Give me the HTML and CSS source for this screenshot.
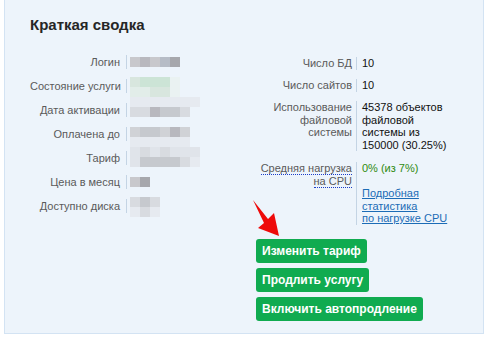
FILE: index.html
```html
<!DOCTYPE html>
<html lang="ru">
<head>
    <meta charset="UTF-8">
    <meta name="viewport" content="width=device-width, initial-scale=1.0">
    <title>Краткая сводка</title>
    <link rel="stylesheet" href="styles.css">
</head>
<body>

    <!-- Панель сводки -->
    <div class="panel">
        <h2 class="panel-title">Краткая сводка</h2>

        <div class="columns">
            <!-- Левая колонка -->
            <div class="info-grid left">
                <div class="lbl">Логин</div><div class="val">&nbsp;</div>
                <div class="lbl">Состояние услуги</div><div class="val">&nbsp;</div>
                <div class="lbl">Дата активации</div><div class="val">&nbsp;</div>
                <div class="lbl">Оплачена до</div><div class="val">&nbsp;</div>
                <div class="lbl">Тариф</div><div class="val">&nbsp;</div>
                <div class="lbl">Цена в месяц</div><div class="val">&nbsp;</div>
                <div class="lbl">Доступно диска</div><div class="val">&nbsp;</div>
            </div>

            <!-- Правая колонка -->
            <div class="right-side">
                <div class="info-grid right">
                    <div class="lbl">Число БД</div><div class="val">10</div>
                    <div class="lbl">Число сайтов</div><div class="val">10</div>
                    <div class="lbl">Использование<br>файловой<br>системы</div>
                    <div class="val">45378 объектов<br>файловой<br>системы из<br>150000 (30.25%)</div>
                    <div class="lbl cpu-row"><span class="hint">Средняя нагрузка</span><br><span class="hint">на CPU</span></div>
                    <div class="val cpu-row"><span class="ok">0% (из 7%)</span><br><br><a href="#">Подробная<br>статистика<br>по нагрузке CPU</a></div>
                </div>

                <div class="actions">
                    <button class="btn">Изменить тариф</button>
                    <button class="btn">Продлить услугу</button>
                    <button class="btn">Включить автопродление</button>
                </div>
            </div>
        </div>

        <!-- Замазанные значения -->
        <div class="mosaic">
            <div class="mrow"><span class="p1"></span><span class="p2"></span><span class="p1"></span><span class="p4"></span><span class="p3"></span></div>
            <div class="mrow"></div>
            <div class="mrow"><span class="q1"></span><span class="q2"></span><span class="q2"></span><span class="q2"></span><span class="q4"></span></div>
            <div class="mrow"><span class="q3"></span><span class="q3"></span><span class="q1"></span><span class="q1"></span><span class="q4"></span></div>
            <div class="mrow"><span class="p9"></span><span class="p9"></span><span class="p9"></span><span class="p9"></span><span class="p9"></span><span class="p9"></span><span class="p9"></span></div>
            <div class="mrow"><span class="p7"></span><span class="p7"></span><span class="p2"></span><span class="p6"></span><span class="p6"></span><span class="p7"></span></div>
            <div class="mrow"></div>
            <div class="mrow"><span class="p5"></span><span class="p6"></span><span class="p6"></span><span class="p5"></span><span class="p2"></span><span class="p5"></span></div>
            <div class="mrow"><span class="p9"></span><span class="p9"></span><span class="p9"></span><span class="p9"></span><span class="p9"></span><span class="p9"></span></div>
            <div class="mrow"><span class="p8"></span><span class="p7"></span><span class="p8"></span><span class="p7"></span><span class="p8"></span><span class="p8"></span><span class="p8"></span></div>
            <div class="mrow"><span class="p8"></span><span class="p6"></span><span class="p6"></span><span class="p6"></span><span class="p6"></span><span class="p7"></span><span class="p9"></span></div>
            <div class="mrow"></div>
            <div class="mrow"><span class="p1"></span><span class="p3"></span></div>
            <div class="mrow"></div>
            <div class="mrow"><span class="p7"></span><span class="p6"></span><span class="p7"></span></div>
            <div class="mrow"><span class="p9"></span><span class="p7"></span><span class="p9"></span></div>
        </div>

        <!-- Стрелка-указатель -->
        <svg class="pointer" width="36" height="44" viewBox="248 196 36 44">
            <polygon points="253,200 268,219 274,213 279,236 258,228 264,223" fill="#ee0a0a"/>
        </svg>
    </div>

</body>
</html>
```

FILE: styles.css
```css
* {
    margin: 0;
    padding: 0;
    box-sizing: border-box;
    font-family: "Liberation Sans", Arial, sans-serif;
}
body {
    background: #fff;
    width: 486px;
    height: 337px;
    overflow: hidden;
}
.panel {
    position: relative;
    margin: -1px 0 0 4px;
    width: 480px;
    height: 335px;
    background: #edf4fb;
    border: 1px solid #d3e3f3;
    padding: 16px 0 0 25px;
}
.panel-title {
    font-size: 15px;
    line-height: 18px;
    font-weight: bold;
    color: #262626;
}
.columns {
    display: flex;
    margin-top: 21px;
}
.info-grid {
    display: grid;
    font-size: 11px;
}
.info-grid .lbl {
    color: #5a5a5a;
    text-align: right;
    white-space: nowrap;
}
.info-grid .val {
    color: #111;
    white-space: nowrap;
    border-left: 1px solid #c4d4e4;
}
.left {
    width: 226px;
    grid-template-columns: 96px 100px;
    row-gap: 10px;
    line-height: 14px;
    align-content: start;
}
.left .lbl {
    padding-right: 6px;
}
.left .val {
    padding-left: 3px;
}
.right {
    padding-top: 2px;
    grid-template-columns: 100px 93px;
    row-gap: 9.5px;
    line-height: 12.5px;
    align-items: start;
}
.right .lbl {
    padding-right: 4px;
}
.right .val {
    padding-left: 5px;
}
.right .cpu-row {
    margin-top: 1.5px;
}
.hint {
    border-bottom: 1px dotted #1a3cc8;
}
.ok {
    color: #2f8a10;
}
.right a {
    color: #1c6cb6;
    text-decoration: underline;
}
.actions {
    display: flex;
    flex-direction: column;
    align-items: flex-start;
    gap: 5px;
    margin-top: 14px;
}
.btn {
    height: 24px;
    padding: 0 6px;
    border: none;
    border-radius: 3px;
    background: #10ab50;
    color: #fff;
    font-size: 12px;
    font-weight: bold;
    line-height: 24px;
    cursor: pointer;
}
.mosaic {
    position: absolute;
    left: 125px;
    top: 57px;
}
.mrow {
    display: flex;
    height: 10px;
}
.mrow span {
    width: 10px;
    height: 10px;
}
.p1 { background: #c8c8cc; }
.p2 { background: #b8b8be; }
.p3 { background: #a6a7ac; }
.p4 { background: #b6bcc6; }
.p5 { background: #d0d2d6; }
.p6 { background: #c6c9ce; }
.p7 { background: #d8dbe0; }
.p8 { background: #e0e4ea; }
.p9 { background: #e6eaf0; }
.q1 { background: #d8e6de; }
.q2 { background: #cce4d6; }
.q3 { background: #e2ede9; }
.q4 { background: #eaf2f2; }
.pointer {
    position: absolute;
    left: 243px;
    top: 196px;
}
```
